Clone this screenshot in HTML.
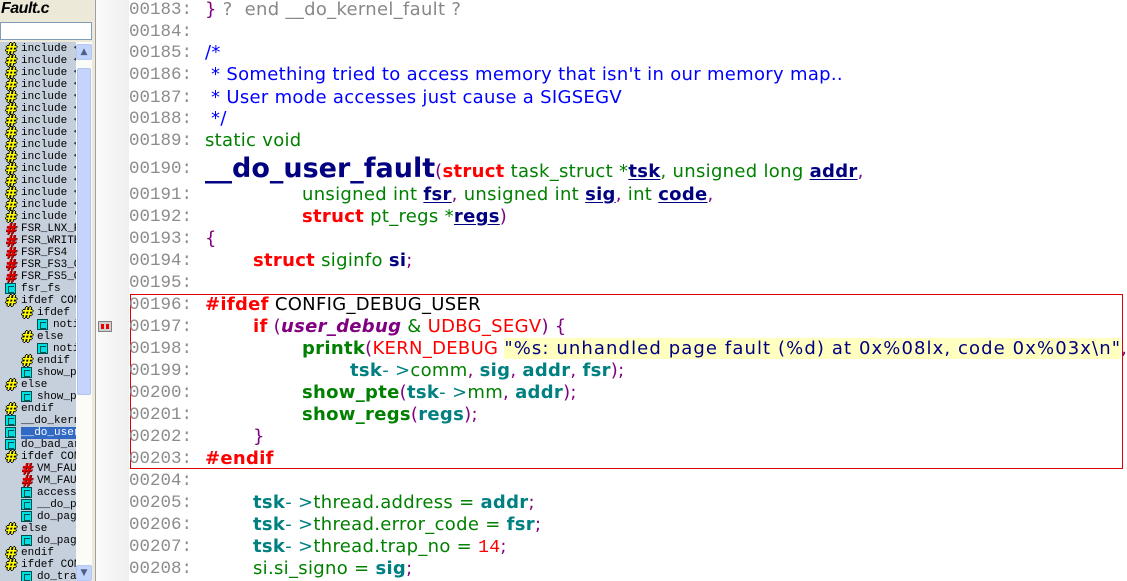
<!DOCTYPE html>
<html><head><meta charset="utf-8"><style>
*{margin:0;padding:0;box-sizing:border-box}
body{width:1127px;height:581px;overflow:hidden;background:#fff;position:relative;font-family:"DejaVu Sans",sans-serif}
#side{position:absolute;left:0;top:0;width:96px;height:581px;background:#ece9d8;border-right:1px solid #a0a0a0}
#title{position:absolute;left:1px;top:0;font:italic bold 16px "Liberation Sans",sans-serif;color:#000;letter-spacing:-0.5px}
#inp{position:absolute;left:0;top:22px;width:92px;height:18px;background:#fff;border:1px solid #7f9db9}
#list{position:absolute;left:0;top:42px;width:76px;height:539px;background:#c6d0dc;overflow:hidden}
.it{position:absolute;height:12px;font:11px "Liberation Mono",monospace;line-height:12px;white-space:nowrap;color:#000}
.ic{position:absolute;width:12px;height:12px;top:0}
.h,.hr{font:bold 15px/12px "DejaVu Sans";text-align:center}
.h{color:#ffff00;text-shadow:1px 0 0 #000,-1px 0 0 #000,0 1px 0 #000,0 -1px 0 #000}
.hr{color:#e00000;text-shadow:1px 0 0 #600,0 1px 0 #600}
.c{background:#00e0e0;border:1px solid #005050;width:11px;height:11px}
.c::after{content:"";position:absolute;left:2px;top:2px;width:5px;height:5px;border:1px solid #005050;border-right:none}
#sb{position:absolute;left:76px;top:42px;width:16px;height:539px;background:#fbfbf8}
#sbu,#sbd{position:absolute;left:0;width:16px;height:16px;background:#c2d3fc;border:1px solid #b4c8f6;border-radius:2px;color:#4d6185;font-size:9px;text-align:center;line-height:14px}
#thumb{position:absolute;left:1px;top:26px;width:14px;height:327px;background:#c4d4fc;border:1px solid #aec3f4;border-radius:2px}
#gut{position:absolute;left:96px;top:0;width:33px;height:581px;background:linear-gradient(90deg,#fafafa,#efefef)}
.ln{position:absolute;left:129px;font:17.5px "Liberation Mono",monospace;color:#8c8c8c;line-height:22px;white-space:pre}
.cd{position:absolute;font-size:18px;letter-spacing:0.3px;line-height:22px;white-space:pre;color:#008000}
.b{font-weight:bold}.r{color:#f00}.p{color:#800080}.n{color:#000080}.t{color:#008080}.bl{color:#0000ff}.g{color:#888}.k{color:#000}
u{text-decoration:underline;text-underline-offset:2px}
</style></head><body>
<div id="side">
<div id="title">Fault.c</div>
<div id="inp"></div>
<div id="list">
</div>
<div id="sb"><div id="sbu" style="top:2px">&#9650;</div><div id="thumb"></div><div id="sbd" style="bottom:0">&#9660;</div></div>
</div>
<div id="gut"></div>
<div style="position:absolute;left:98px;top:321px;width:14px;height:11px;background:#d0d0d0;border:1px solid #808080"><div style="position:absolute;left:2px;top:2px;width:8px;height:5px;background:#e00"></div><div style="position:absolute;left:5px;top:1px;width:2px;height:7px;background:#d0d0d0"></div></div>

<div style="position:absolute;left:130px;top:294px;width:993px;height:175px;border:1px solid #e00000"></div>

<div class="ln" style="top:-1px">00183:</div><div class="cd" style="left:205px;top:-1px"><span class="p">}</span><span class="g"> ?  end __do_kernel_fault ?</span></div>
<div class="ln" style="top:21px">00184:</div>
<div class="ln" style="top:42px">00185:</div><div class="cd bl" style="left:205px;top:42px">/*</div>
<div class="ln" style="top:64px">00186:</div><div class="cd bl" style="left:205px;top:64px"> * Something tried to access memory that isn't in our memory map..</div>
<div class="ln" style="top:87px">00187:</div><div class="cd bl" style="left:205px;top:87px"> * User mode accesses just cause a SIGSEGV</div>
<div class="ln" style="top:108px">00188:</div><div class="cd bl" style="left:205px;top:108px"> */</div>
<div class="ln" style="top:130px">00189:</div><div class="cd" style="left:205px;top:130px">static void</div>
<div class="ln" style="top:158px">00190:</div><div class="cd" style="left:205px;top:152px;line-height:34px"><span class="n b" style="font-size:27px;letter-spacing:0">__do_user_fault</span><span class="p">(</span><span class="r b">struct</span> task_struct *<u class="n b">tsk</u>, unsigned long <u class="n b">addr</u><span class="p">,</span></div>
<div class="ln" style="top:184px">00191:</div><div class="cd" style="left:302px;top:184px">unsigned int <u class="n b">fsr</u><span class="p">,</span> unsigned int <u class="n b">sig</u><span class="p">,</span> int <u class="n b">code</u><span class="p">,</span></div>
<div class="ln" style="top:206px">00192:</div><div class="cd" style="left:302px;top:206px"><span class="r b">struct</span> pt_regs *<u class="n b">regs</u><span class="p">)</span></div>
<div class="ln" style="top:228px">00193:</div><div class="cd p" style="left:205px;top:228px">{</div>
<div class="ln" style="top:250px">00194:</div><div class="cd" style="left:253px;top:250px"><span class="r b">struct</span> siginfo <span class="n b">si</span><span class="p">;</span></div>
<div class="ln" style="top:272px">00195:</div>
<div class="ln" style="top:294px">00196:</div><div class="cd" style="left:205px;top:294px"><span class="r b">#ifdef</span> <span class="k">CONFIG_DEBUG_USER</span></div>
<div class="ln" style="top:316px">00197:</div><div class="cd" style="left:253px;top:316px"><span class="r b">if</span> <span class="p">(</span><span class="p b" style="font-style:italic">user_debug</span> &amp; <span class="r">UDBG_SEGV</span><span class="p">) {</span></div>
<div class="ln" style="top:338px">00198:</div><div class="cd" style="left:302px;top:338px"><span class="b">printk</span><span class="p">(</span><span class="r">KERN_DEBUG</span> <span class="n" style="background:#ffffc0;letter-spacing:1.1px">"%s: unhandled page fault (%d) at 0x%08lx, code 0x%03x\n"</span><span class="p">,</span></div>
<div class="ln" style="top:360px">00199:</div><div class="cd" style="left:350px;top:360px"><span class="t b">tsk</span><span class="t">- &gt;</span>comm<span class="p">,</span> <span class="t b">sig</span><span class="p">,</span> <span class="t b">addr</span><span class="p">,</span> <span class="t b">fsr</span><span class="p">);</span></div>
<div class="ln" style="top:382px">00200:</div><div class="cd" style="left:302px;top:382px"><span class="b">show_pte</span><span class="p">(</span><span class="t b">tsk</span><span class="t">- &gt;</span>mm<span class="p">,</span> <span class="t b">addr</span><span class="p">);</span></div>
<div class="ln" style="top:404px">00201:</div><div class="cd" style="left:302px;top:404px"><span class="b">show_regs</span><span class="p">(</span><span class="t b">regs</span><span class="p">);</span></div>
<div class="ln" style="top:426px">00202:</div><div class="cd p" style="left:253px;top:426px">}</div>
<div class="ln" style="top:448px">00203:</div><div class="cd r b" style="left:205px;top:448px">#endif</div>
<div class="ln" style="top:470px">00204:</div>
<div class="ln" style="top:492px">00205:</div><div class="cd" style="left:253px;top:492px"><span class="t b">tsk</span><span class="t">- &gt;</span>thread.address = <span class="t b">addr</span><span class="p">;</span></div>
<div class="ln" style="top:514px">00206:</div><div class="cd" style="left:253px;top:514px"><span class="t b">tsk</span><span class="t">- &gt;</span>thread.error_code = <span class="t b">fsr</span><span class="p">;</span></div>
<div class="ln" style="top:536px">00207:</div><div class="cd" style="left:253px;top:536px"><span class="t b">tsk</span><span class="t">- &gt;</span>thread.trap_no = <span class="r" style="font-family:'Liberation Mono'">14</span><span class="p">;</span></div>
<div class="ln" style="top:558px">00208:</div><div class="cd" style="left:253px;top:558px">si.si_signo = <span class="t b">sig</span><span class="p">;</span></div>

<script>
var items=[];
for(var i=0;i<14;i++)items.push([0,'h','include <']);
items.push([0,'h','include "']);
['FSR_LNX_P','FSR_WRITE','FSR_FS4','FSR_FS3_O','FSR_FS5_O'].forEach(function(s){items.push([0,'hr',s])});
items.push([0,'c','fsr_fs']);
items.push([0,'h','ifdef CON'],[1,'h','ifdef (' ],[2,'c','noti'],[1,'h','else'],[2,'c','noti'],[1,'h','endif'],[1,'c','show_p'],
[0,'h','else'],[1,'c','show_p'],[0,'h','endif'],[0,'c','__do_kern'],[0,'cs','__do_user'],[0,'c','do_bad_ar'],
[0,'h','ifdef CON'],[1,'hr','VM_FAU'],[1,'hr','VM_FAU'],[1,'c','access_'],[1,'c','__do_p'],[1,'c','do_pag'],
[0,'h','else'],[1,'c','do_pag'],[0,'h','endif'],[0,'h','ifdef CON'],[1,'c','do_tra']);
var L=document.getElementById('list'),h='';
items.forEach(function(it,i){
 var y=1+i*12,x=5+it[0]*16,t=it[1],ic='';
 if(t=='h')ic='<span class="ic h" style="left:'+x+'px">#</span>';
 else if(t=='hr')ic='<span class="ic hr" style="left:'+x+'px">#</span>';
 else ic='<span class="ic c" style="left:'+x+'px"></span>';
 var tx=it[2];
 var st=t=='cs'?'background:#316ac5;color:#fff;':'';
 h+='<div class="it" style="top:'+y+'px;left:0;width:76px">'+ic+'<span style="position:absolute;left:'+(x+16)+'px;'+st+'">'+tx.replace(/</g,'&lt;')+'</span></div>';
});
L.innerHTML=h;
</script>
</body></html>
